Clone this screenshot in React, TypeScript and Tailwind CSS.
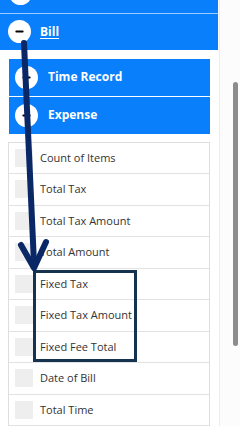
import { Minus } from "lucide-react";

const fields = [
  "Count of Items",
  "Total Tax",
  "Total Tax Amount",
  "Total Amount",
  "Fixed Tax",
  "Fixed Tax Amount",
  "Fixed Fee Total",
  "Date of Bill",
  "Total Time",
];

function Knob({ dark }: { dark?: boolean }) {
  return (
    <span className="flex h-[23px] w-[23px] shrink-0 items-center justify-center rounded-full bg-white">
      {dark && <Minus className="h-[11px] w-[11px] text-black" strokeWidth={4} />}
    </span>
  );
}

export default function App() {
  return (
    <div
      className="relative flex h-[426px] w-[240px] overflow-hidden bg-white"
      style={{ fontFamily: '"Open Sans", "Noto Sans", sans-serif' }}
    >
      <div className="flex w-[220px] flex-col border-r border-[#ececec]">
        {/* parent group, scrolled past */}
        <div className="relative h-[13px] w-[218px] bg-[#0a7ffb]">
          <span className="absolute left-[9px] top-[-18px] h-[23px] w-[23px] rounded-full bg-white" />
        </div>
        <div className="h-px w-[218px] bg-[#9ccbff]" />
        <div className="flex h-[36px] w-[218px] items-center gap-[9px] bg-[#0a7ffb] pl-[8px]">
          <Knob dark />
          <span className="text-[12px] font-bold text-white underline underline-offset-2">Bill</span>
        </div>

        <div className="mt-[9px] ml-[9px] flex w-[201px] flex-col gap-px">
          {["Time Record", "Expense"].map((g) => (
            <div key={g} className="flex h-[37px] items-center gap-[10px] bg-[#0a7ffb] pl-[6px]">
              <Knob dark />
              <span className="text-[12px] font-bold text-white">{g}</span>
            </div>
          ))}
        </div>

        <div className="mt-[8px] ml-[8px] w-[202px] border-x border-t border-[#dedede]">
          {fields.map((f) => (
            <div key={f} className="flex h-[31.5px] items-center gap-[7px] border-b border-[#e2e2e2] pl-[6px]">
              <span className="h-[18px] w-[18px] shrink-0 bg-[#eeeeee]" />
              <span className="text-[11px] text-[#333333]">{f}</span>
            </div>
          ))}
        </div>
      </div>

      {/* scrollbar */}
      <div className="relative flex-1 bg-[#fcfcfc]">
        <div className="absolute left-[13px] top-[82px] h-[264px] w-[5px] rounded-full bg-[#8c8c8c]" />
      </div>

      {/* annotation box */}
      <div className="absolute left-[33px] top-[270px] h-[92px] w-[104px] border-[3px] border-[#15324f]" />

      {/* annotation arrow */}
      <svg className="absolute left-0 top-0" width="240" height="426" viewBox="0 0 240 426">
        <path d="M24 43 L34 264" stroke="#0a2866" strokeWidth="6" strokeLinecap="round" fill="none" />
        <path d="M21 245 L34 268 L46 242" stroke="#0a2866" strokeWidth="6" strokeLinecap="round" strokeLinejoin="round" fill="none" />
      </svg>
    </div>
  );
}
